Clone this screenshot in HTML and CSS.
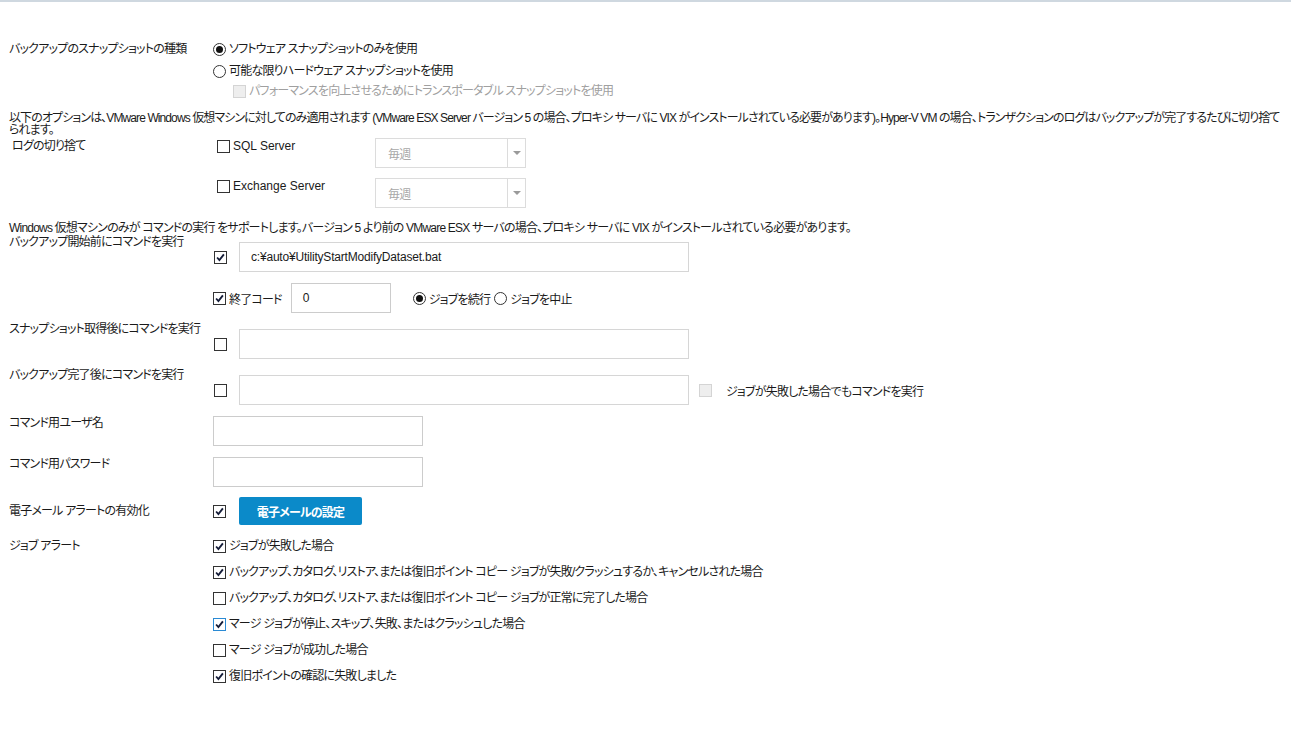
FILE: index.html
```html
<!DOCTYPE html>
<html lang="ja">

<head>
    <meta charset="UTF-8">
    <title>バックアップ設定</title>
    <link rel="stylesheet" href="styles.css">
</head>

<body>
    <div class="topline"></div>
    <div class="form">
        <div class="row snap">
            <div class="label">バックアップのスナップショットの種類</div>
            <div class="ctrl">
                <div class="opt"><span class="radio on"></span>ソフトウェア スナップショットのみを使用</div>
                <div class="opt"><span class="radio"></span>可能な限りハードウェア スナップショットを使用</div>
                <div class="opt sub disabled"><span class="cb dis"></span>パフォーマンスを向上させるためにトランスポータブル スナップショットを使用</div>
            </div>
        </div>

        <p class="note first">以下のオプションは、VMware Windows 仮想マシンに対してのみ適用されます (VMware ESX Server バージョン 5 の場合、プロキシ サーバに VIX がインストールされている必要があります)。Hyper-V VM の場合、トランザクションのログはバックアップが完了するたびに切り捨てられます。</p>

        <div class="row trunc-row">
            <div class="label indent">ログの切り捨て</div>
            <div class="ctrl">
                <div class="trunc">
                    <div class="opt tight latin"><span class="cb"></span>SQL Server</div>
                    <div class="select"><span class="val">毎週</span><span class="arrow"></span></div>
                </div>
                <div class="trunc">
                    <div class="opt tight latin"><span class="cb"></span>Exchange Server</div>
                    <div class="select"><span class="val">毎週</span><span class="arrow"></span></div>
                </div>
            </div>
        </div>

        <p class="note second">Windows 仮想マシンのみが コマンドの実行 をサポートします。バージョン 5 より前の VMware ESX サーバの場合、プロキシ サーバに VIX がインストールされている必要があります。</p>

        <div class="row cmd-row pre">
            <div class="label">バックアップ開始前にコマンドを実行</div>
            <div class="ctrl">
                <div class="line">
                    <span class="cb on"><svg viewBox="0 0 13 13"><path d="M2.5 6.5 L5.2 9.5 L10.5 2.8" /></svg></span>
                    <div class="input wide">c:¥auto¥UtilityStartModifyDataset.bat</div>
                </div>
                <div class="line exit">
                    <span class="cb on"><svg viewBox="0 0 13 13"><path d="M2.5 6.5 L5.2 9.5 L10.5 2.8" /></svg></span>
                    <span class="exit-label">終了コード</span>
                    <div class="input code">0</div>
                    <span class="radio on"></span><span class="rtext">ジョブを続行</span>
                    <span class="radio"></span><span class="rtext">ジョブを中止</span>
                </div>
            </div>
        </div>

        <div class="row cmd-row">
            <div class="label">スナップショット取得後にコマンドを実行</div>
            <div class="ctrl">
                <div class="line">
                    <span class="cb"></span>
                    <div class="input wide"></div>
                </div>
            </div>
        </div>

        <div class="row cmd-row">
            <div class="label">バックアップ完了後にコマンドを実行</div>
            <div class="ctrl">
                <div class="line">
                    <span class="cb"></span>
                    <div class="input wide"></div>
                    <span class="cb dis after"></span>
                    <span class="after-text">ジョブが失敗した場合でもコマンドを実行</span>
                </div>
            </div>
        </div>

        <div class="row field-row">
            <div class="label">コマンド用ユーザ名</div>
            <div class="ctrl"><div class="input short"></div></div>
        </div>

        <div class="row field-row">
            <div class="label">コマンド用パスワード</div>
            <div class="ctrl"><div class="input short"></div></div>
        </div>

        <div class="row email-row">
            <div class="label">電子メール アラートの有効化</div>
            <div class="ctrl line">
                <span class="cb on"><svg viewBox="0 0 13 13"><path d="M2.5 6.5 L5.2 9.5 L10.5 2.8" /></svg></span>
                <button class="btn">電子メールの設定</button>
            </div>
        </div>

        <div class="row alerts">
            <div class="label">ジョブ アラート</div>
            <div class="ctrl">
                <div class="alert"><span class="cb on"><svg viewBox="0 0 13 13"><path d="M2.5 6.5 L5.2 9.5 L10.5 2.8" /></svg></span>ジョブが失敗した場合</div>
                <div class="alert"><span class="cb on"><svg viewBox="0 0 13 13"><path d="M2.5 6.5 L5.2 9.5 L10.5 2.8" /></svg></span>バックアップ、カタログ、リストア、または復旧ポイント コピー ジョブが失敗/クラッシュするか、キャンセルされた場合</div>
                <div class="alert"><span class="cb"></span>バックアップ、カタログ、リストア、または復旧ポイント コピー ジョブが正常に完了した場合</div>
                <div class="alert"><span class="cb on focus"><svg viewBox="0 0 13 13"><path d="M2.5 6.5 L5.2 9.5 L10.5 2.8" /></svg></span>マージ ジョブが停止、スキップ、失敗、またはクラッシュした場合</div>
                <div class="alert"><span class="cb"></span>マージ ジョブが成功した場合</div>
                <div class="alert"><span class="cb on"><svg viewBox="0 0 13 13"><path d="M2.5 6.5 L5.2 9.5 L10.5 2.8" /></svg></span>復旧ポイントの確認に失敗しました</div>
            </div>
        </div>
    </div>
</body>

</html>
```

FILE: styles.css
```css
* {
    box-sizing: border-box;
}

body {
    margin: 0;
    background-color: #ffffff;
    color: #1a1a1a;
    font-family: "Liberation Sans", "Noto Sans CJK JP", sans-serif;
    font-size: 12px;
    font-feature-settings: "palt";
    letter-spacing: -0.8px;
}

.latin {
    letter-spacing: 0;
}

.topline {
    width: 1291px;
    height: 2px;
    background-color: #cfd8e0;
}

.form {
    padding: 0 9px;
}

.row {
    display: flex;
    align-items: flex-start;
}

.label {
    width: 204px;
    flex-shrink: 0;
    line-height: 14px;
}

.label.indent {
    padding-left: 3px;
}

.opt {
    display: flex;
    align-items: center;
    line-height: 22px;
    white-space: nowrap;
}

.opt.sub {
    padding-left: 20px;
    line-height: 18px;
}

.disabled {
    color: #a0a0a0;
}

/* radio + checkbox */
.radio {
    width: 13px;
    height: 13px;
    border: 1px solid #333333;
    border-radius: 50%;
    margin-right: 3px;
    flex-shrink: 0;
    display: grid;
    place-content: center;
    background-color: #ffffff;
}

.radio.on::after {
    content: "";
    width: 7px;
    height: 7px;
    border-radius: 50%;
    background-color: #111111;
}

.cb {
    width: 13px;
    height: 13px;
    border: 1px solid #333333;
    margin-right: 3px;
    flex-shrink: 0;
    display: inline-block;
    background-color: #ffffff;
}

.cb svg {
    display: block;
    width: 11px;
    height: 11px;
    fill: none;
    stroke: #141c38;
    stroke-width: 2.2;
}

.cb.focus {
    border-color: #2a8ad4;
}

.cb.dis {
    border-color: #d4d4d4;
    background-color: #eeeeee;
}

/* snapshot block */
.snap {
    margin-top: 36px;
}

.snap .label {
    line-height: 22px;
}

.note {
    margin: 0;
    line-height: 12px;
    width: 1282px;
}

.note.first {
    margin-top: 12px;
    width: 1274px;
    letter-spacing: -0.9px;
}

.note.second {
    margin-top: 13px;
    line-height: 14px;
}

/* truncate logs */
.trunc-row {
    margin-top: 2px;
}

.trunc-row .label {
    line-height: 16px;
}

.trunc {
    display: flex;
    align-items: flex-start;
    padding-left: 4px;
    margin-bottom: 10px;
}

.trunc:last-child {
    margin-bottom: 0;
}

.opt.tight {
    width: 158px;
    line-height: 16px;
}

.select {
    width: 151px;
    height: 30px;
    border: 1px solid #dcdcdc;
    display: flex;
    align-items: center;
}

.select .val {
    flex: 1;
    padding-left: 12px;
    color: #a8a8a8;
}

.select .arrow {
    width: 18px;
    height: 100%;
    border-left: 1px solid #dcdcdc;
    display: grid;
    place-content: center;
}

.select .arrow::after {
    content: "";
    border-left: 4px solid transparent;
    border-right: 4px solid transparent;
    border-top: 4px solid #9a9a9a;
}

/* command rows */
.cmd-row {
    margin-top: 9px;
}

.cmd-row.pre {
    margin-top: 0;
}

.cmd-row .ctrl {
    padding-top: 7px;
}

.line {
    display: flex;
    align-items: center;
}

.line > .cb {
    margin-left: 1px;
    margin-right: 12px;
}

.input {
    height: 30px;
    border: 1px solid #d6d6d6;
    padding: 0 11px;
    line-height: 28px;
    background-color: #ffffff;
    letter-spacing: -0.2px;
}

.input.wide {
    width: 450px;
}

.input.code {
    width: 100px;
    border-color: #cccccc;
}

.input.short {
    width: 210px;
    border-color: #cccccc;
}

.line.exit {
    margin-top: 11px;
}

.line.exit > .cb {
    margin-left: 0;
    margin-right: 3px;
}

.exit-label {
    margin-right: 9px;
}

.line.exit .input {
    margin-right: 22px;
}

.line.exit .radio {
    margin-right: 3px;
}

.rtext {
    margin-right: 4px;
}

.line > .cb.after {
    margin-left: 10px;
    margin-right: 14px;
}

.after-text {
    white-space: nowrap;
}

/* user / password */
.field-row {
    margin-top: 11px;
}

/* email */
.email-row {
    margin-top: 10px;
    align-items: center;
}

.email-row .cb {
    margin-left: 0;
    margin-right: 13px;
}

.btn {
    width: 123px;
    height: 28px;
    border: none;
    border-radius: 2px;
    background-color: #0b8ac9;
    color: #ffffff;
    font-family: inherit;
    font-size: 12px;
    font-weight: bold;
    font-feature-settings: "palt";
    letter-spacing: -0.8px;
    padding: 0;
}

/* job alerts */
.alerts {
    margin-top: 8px;
}

.alerts .label {
    line-height: 26px;
}

.alert {
    display: flex;
    align-items: center;
    line-height: 26px;
    white-space: nowrap;
}
```
